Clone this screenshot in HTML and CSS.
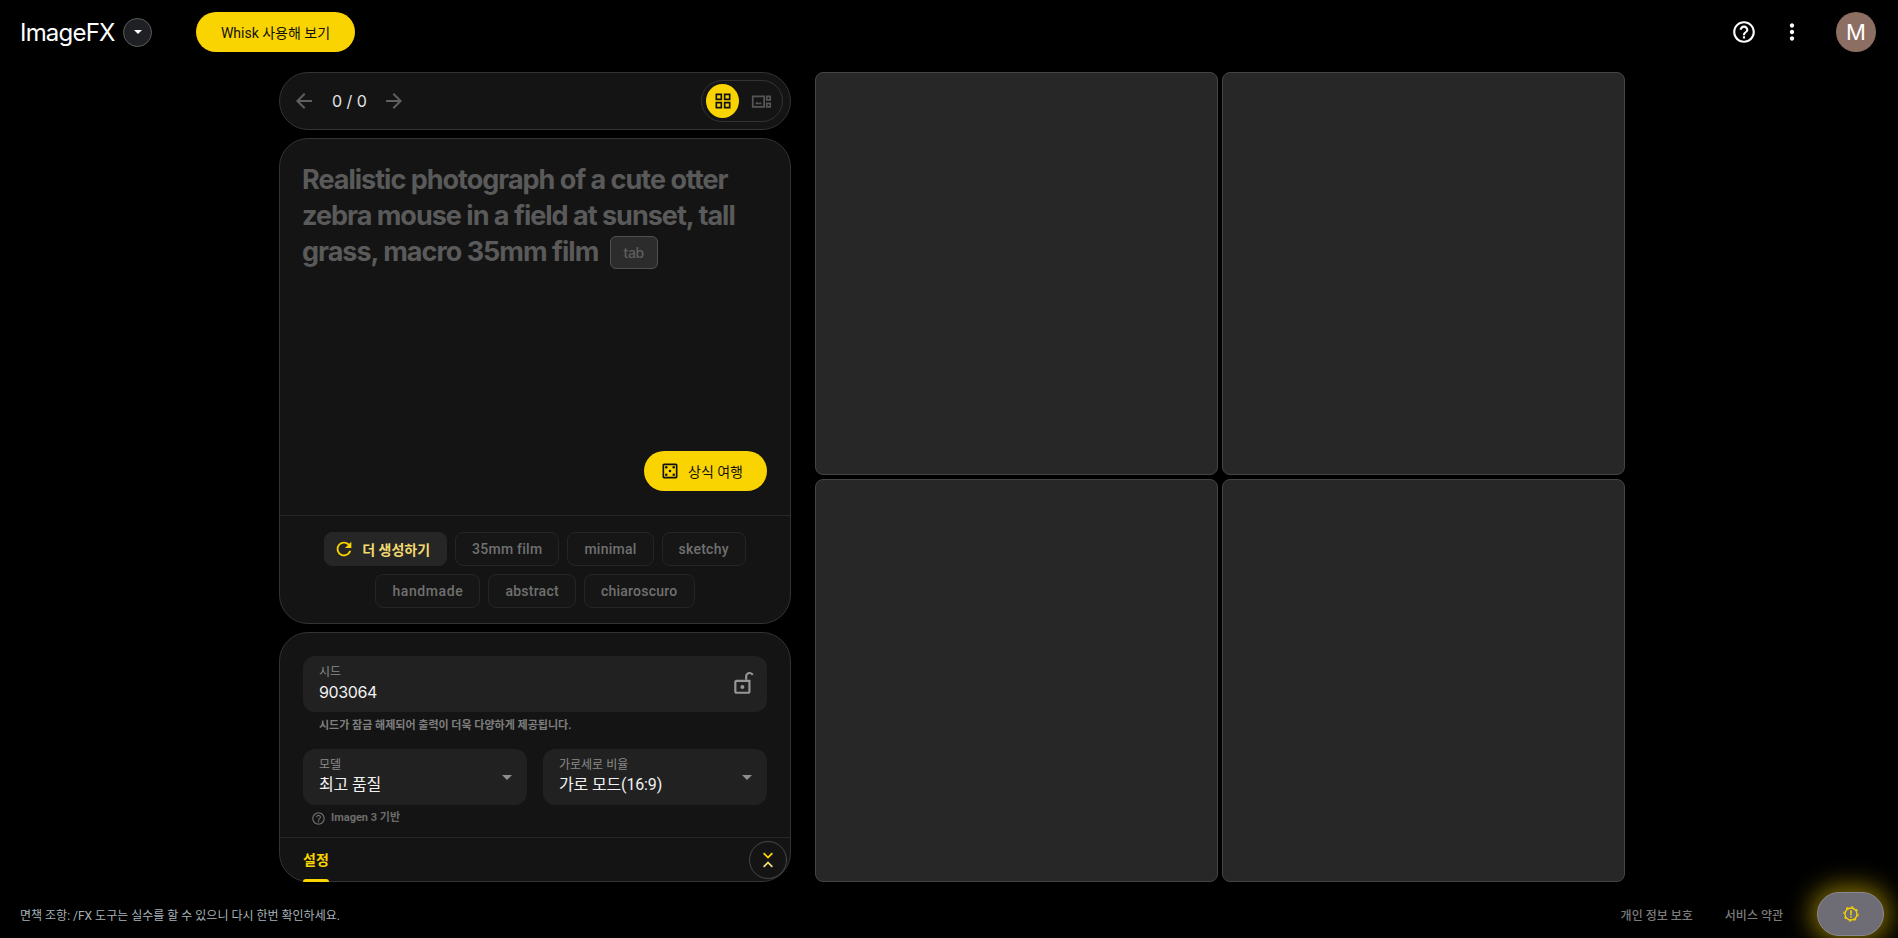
FILE: index.html
```html
<!DOCTYPE html>
<html lang="ko">
<head>
    <meta charset="UTF-8">
    <meta name="viewport" content="width=device-width, initial-scale=1.0">
    <title>ImageFX</title>
    <link rel="stylesheet" href="styles.css">
</head>
<body>
    <header class="topbar">
        <div class="brand">
            <span class="logo">ImageFX</span>
            <button class="logo-menu"><span class="logo-caret"></span></button>
            <button class="whisk-btn">Whisk 사용해 보기</button>
        </div>
        <div class="top-actions">
            <svg class="top-icon" viewBox="0 0 24 24"><path d="M11 18h2v-2h-2v2zm1-16C6.48 2 2 6.48 2 12s4.48 10 10 10 10-4.48 10-10S17.52 2 12 2zm0 18c-4.41 0-8-3.59-8-8s3.59-8 8-8 8 3.59 8 8-3.59 8-8 8zm0-14c-2.21 0-4 1.79-4 4h2c0-1.1.9-2 2-2s2 .9 2 2c0 2-3 1.75-3 5h2c0-2.25 3-2.5 3-5 0-2.21-1.79-4-4-4z"/></svg>
            <svg class="top-icon" viewBox="0 0 24 24"><path d="M12 8c1.1 0 2-.9 2-2s-.9-2-2-2-2 .9-2 2 .9 2 2 2zm0 2c-1.1 0-2 .9-2 2s.9 2 2 2 2-.9 2-2-.9-2-2-2zm0 6c-1.1 0-2 .9-2 2s.9 2 2 2 2-.9 2-2-.9-2-2-2z"/></svg>
            <div class="avatar">M</div>
        </div>
    </header>

    <main class="workspace">
        <section class="left-col">
            <div class="pager">
                <svg class="arrow" viewBox="0 0 24 24"><path d="M20 11H7.83l5.59-5.59L12 4l-8 8 8 8 1.41-1.41L7.83 13H20v-2z"/></svg>
                <span class="page-count">0 / 0</span>
                <svg class="arrow" viewBox="0 0 24 24"><path d="M12 4l-1.41 1.41L16.17 11H4v2h12.17l-5.58 5.59L12 20l8-8z"/></svg>
                <div class="view-toggle">
                    <span class="view-on">
                        <svg viewBox="0 0 24 24" class="view-icon"><path d="M4 4h6v6H4zM14 4h6v6h-6zM4 14h6v6H4zM14 14h6v6h-6z"/></svg>
                    </span>
                    <svg viewBox="0 0 24 24" class="view-off"><path d="M2 6h13v12H2z"/><path d="M4.500 15l2.500-3 2 2 1.500-1.500 2 2.500z" class="fill"/><path d="M18 6h4v4h-4zM18 14h4v4h-4z"/></svg>
                </div>
            </div>

            <div class="card prompt-card">
                <div class="prompt-area">
                    <p class="prompt-text">Realistic photograph of a cute otter zebra mouse in a field at sunset, tall grass, macro 35mm film <span class="tab-key">tab</span></p>
                    <button class="lucky-btn">
                        <svg viewBox="0 0 24 24"><path d="M19 3H5c-1.100 0-2 .9-2 2v14c0 1.100.9 2 2 2h14c1.100 0 2-.9 2-2V5c0-1.100-.9-2-2-2zm0 16H5V5h14v14z"/><circle cx="7.500" cy="16.500" r="1.500"/><circle cx="7.500" cy="7.500" r="1.500"/><circle cx="12" cy="12" r="1.500"/><circle cx="16.500" cy="16.500" r="1.500"/><circle cx="16.500" cy="7.500" r="1.500"/></svg>
                        상식 여행
                    </button>
                </div>
                <div class="chips">
                    <button class="chip chip-more">
                        <svg viewBox="0 0 24 24"><path d="M17.650 6.350C16.200 4.900 14.210 4 12 4c-4.420 0-7.990 3.580-7.990 8s3.570 8 7.990 8c3.730 0 6.840-2.550 7.730-6h-2.080c-.82 2.330-3.040 4-5.650 4-3.310 0-6-2.690-6-6s2.690-6 6-6c1.660 0 3.140.69 4.220 1.780L13 11h7V4l-2.350 2.350z"/></svg>
                        더 생성하기
                    </button>
                    <button class="chip">35mm film</button>
                    <button class="chip">minimal</button>
                    <button class="chip">sketchy</button>
                    <button class="chip chip-hand">handmade</button>
                    <button class="chip">abstract</button>
                    <button class="chip">chiaroscuro</button>
                </div>
            </div>

            <div class="card settings-card">
                <div class="settings-body">
                    <div class="field seed-field">
                        <div>
                            <div class="field-label">시드</div>
                            <div class="field-value seed-value">903064</div>
                        </div>
                        <svg class="lock" viewBox="0 0 24 24"><path d="M10.500 17.500c1 0 1.800-.8 1.800-1.800s-.8-1.800-1.800-1.800-1.800.8-1.800 1.800.8 1.800 1.800 1.800zM18 9H5c-1.100 0-2 .9-2 2v9c0 1.100.9 2 2 2h11c1.100 0 2-.9 2-2V9zm-2 11H5v-9h11v9z"/><path d="M13 9V6c0-2.300 1.800-4.200 4.200-4.200 1.600 0 3 .9 3.700 2.200l-1.700 1c-.4-.8-1.100-1.300-2-1.300-1.300 0-2.200 1-2.200 2.300v3z"/></svg>
                    </div>
                    <p class="hint">시드가 잠금 해제되어 출력이 더욱 다양하게 제공됩니다.</p>
                    <div class="select-row">
                        <div class="field">
                            <div>
                                <div class="field-label">모델</div>
                                <div class="field-value">최고 품질</div>
                            </div>
                            <span class="caret"></span>
                        </div>
                        <div class="field">
                            <div>
                                <div class="field-label">가로세로 비율</div>
                                <div class="field-value">가로 모드(16:9)</div>
                            </div>
                            <span class="caret"></span>
                        </div>
                    </div>
                    <div class="model-note">
                        <svg viewBox="0 0 24 24"><path d="M11 18h2v-2h-2v2zm1-16C6.480 2 2 6.480 2 12s4.480 10 10 10 10-4.480 10-10S17.520 2 12 2zm0 18c-4.410 0-8-3.590-8-8s3.590-8 8-8 8 3.590 8 8-3.590 8-8 8zm0-14c-2.210 0-4 1.790-4 4h2c0-1.100.9-2 2-2s2 .9 2 2c0 2-3 1.750-3 5h2c0-2.250 3-2.500 3-5 0-2.210-1.790-4-4-4z"/></svg>
                        Imagen 3 기반
                    </div>
                </div>
                <div class="tabbar">
                    <div class="tab">
                        <span>설정</span>
                        <span class="tab-line"></span>
                    </div>
                    <button class="collapse-btn">
                        <svg viewBox="0 0 24 24"><path d="M6 4.500l1.500-1.500L12 7.500 16.500 3 18 4.500l-6 6z"/><path d="M6 19.500L7.500 21l4.500-4.500 4.500 4.500 1.500-1.500-6-6z" class="pale"/></svg>
                    </button>
                </div>
            </div>
        </section>

        <section class="results">
            <div class="slot"></div>
            <div class="slot"></div>
            <div class="slot"></div>
            <div class="slot"></div>
        </section>
    </main>

    <footer class="footer">
        <span class="disclaimer">면책 조항: /FX 도구는 실수를 할 수 있으니 다시 한번 확인하세요.</span>
        <div class="footer-right">
            <span class="footer-link">개인 정보 보호</span>
            <span class="footer-link">서비스 약관</span>
            <button class="feedback-btn">
                <svg viewBox="0 0 24 24"><circle cx="12" cy="12" r="8" class="ring"/><circle cx="12" cy="12" r="9.500" class="teeth"/><path d="M11 7h2v6.500h-2zM11 15h2v2h-2z"/></svg>
            </button>
        </div>
    </footer>
</body>
</html>
```

FILE: styles.css
```css
* { box-sizing: border-box; }
html, body { height: 100%; }
body { margin: 0; background-color: #000; color: #e3e3e3; font-family: "Roboto", "Noto Sans CJK KR", sans-serif; overflow: hidden; display: flex; flex-direction: column; }
button { font-family: inherit; border: none; padding: 0; cursor: pointer; }
svg { display: block; fill: currentColor; }

/* top bar */
.topbar { height: 72px; flex: none; display: flex; justify-content: space-between; padding: 12px 22px 0 20px; align-items: flex-start; }
.brand { display: flex; align-items: center; height: 40px; }
.logo { font-family: "Inter", sans-serif; font-size: 24px; letter-spacing: -0.8px; color: #fff; width: 103px; }
.logo-menu { width: 29px; height: 29px; border-radius: 50%; background-color: #1f2023; border: 1px solid #5c5c5c; display: flex; align-items: center; justify-content: center; }
.logo-caret { width: 0; height: 0; border-left: 4px solid transparent; border-right: 4px solid transparent; border-top: 4px solid #fff; }
.whisk-btn { margin-left: 44px; width: 159px; height: 40px; border-radius: 20px; background-color: #fad400; color: #111; font-size: 14px; font-weight: 400; }
.top-actions { display: flex; align-items: center; height: 40px; }
.top-icon { width: 26px; height: 26px; color: #fff; margin-right: 22px; }
.avatar { width: 40px; height: 40px; border-radius: 50%; background-color: #8d6e63; color: #fff; font-family: "Inter", sans-serif; font-size: 22px; display: flex; align-items: center; justify-content: center; margin-left: 9px; }

/* main layout */
.workspace { height: 810px; flex: none; display: flex; gap: 24px; padding-left: 279px; }
.left-col { width: 512px; display: flex; flex-direction: column; gap: 8px; }
.card { background-color: #141414; border: 1px solid #333; border-radius: 29px; }

.pager { height: 58px; flex: none; display: flex; align-items: center; background-color: #141414; border: 1px solid #333; border-radius: 29px; padding: 0 7px 0 12px; }
.arrow { width: 24px; height: 24px; color: #606060; }
.page-count { margin: 0 16px; font-size: 16px; font-family: "Inter", sans-serif; color: #e3e3e3; width: 34px; white-space: nowrap; }
.view-toggle { margin-left: auto; width: 82px; height: 42px; border: 1px solid #333; border-radius: 21px; display: flex; align-items: center; padding-left: 4px; gap: 12px; }
.view-on { width: 33px; height: 34px; border-radius: 50%; background-color: #fad400; display: flex; align-items: center; justify-content: center; }
.view-icon { width: 20px; height: 20px; fill: none; stroke: #111; stroke-width: 2; }
.view-off { width: 21px; height: 21px; fill: none; stroke: #555; stroke-width: 2; }
.view-off .fill { fill: #555; stroke: none; }

/* prompt card */
.prompt-card { height: 486px; flex: none; display: flex; flex-direction: column; }
.prompt-area { flex: 1; padding: 23px 23px 24px 22px; display: flex; flex-direction: column; justify-content: space-between; border-bottom: 1px solid #262626; }
.prompt-text { margin: 0; font-family: "Inter", sans-serif; font-size: 27px; line-height: 36px; font-weight: 700; letter-spacing: -1px; color: #5a5a5a; }
.tab-key { display: inline-block; width: 48px; height: 33px; line-height: 31px; margin-left: 6px; text-align: center; font-size: 14px; font-weight: 500; letter-spacing: -0.3px; border: 1px solid #505050; border-radius: 6px; background-color: #2c2c2c; color: #5f5f5f; vertical-align: 3px; }
.lucky-btn { align-self: flex-end; width: 123px; height: 40px; border-radius: 20px; background-color: #fad400; color: #111; font-size: 14px; font-weight: 400; display: flex; align-items: center; padding-left: 16px; gap: 8px; }
.lucky-btn svg { width: 20px; height: 20px; }

.chips { padding: 16px 24px 15px; display: flex; flex-wrap: wrap; justify-content: center; gap: 8px; }
.chip { height: 34px; padding: 0 16px; border-radius: 8px; border: 1px solid #252525; background-color: #161616; color: #707070; font-size: 14px; font-weight: 500; letter-spacing: 0.25px; display: flex; align-items: center; }
.chip-more { background-color: #262626; border-color: #262626; color: #f2da6e; gap: 7px; padding: 0 16px 0 8px; font-weight: 700; letter-spacing: 0; }
.chip-more svg { width: 22px; height: 22px; color: #fad400; }
.chip-hand { letter-spacing: 0.6px; }

/* settings card */
.settings-card { height: 250px; flex: none; display: flex; flex-direction: column; }
.settings-body { padding: 23px 23px 11px; border-bottom: 1px solid #262626; }
.field { height: 56px; flex: 1; background-color: #212121; border-radius: 12px; padding: 8px 16px; display: flex; justify-content: space-between; align-items: center; }
.field-label { font-size: 12px; line-height: 16px; color: #8a8a8a; }
.field-value { font-size: 16px; line-height: 24px; color: #f1f1f1; letter-spacing: -0.15px; }
.seed-value { font-family: "Inter", sans-serif; letter-spacing: -0.4px; }
.lock { width: 26px; height: 26px; color: #969696; margin: -2px -6px 0 0; }
.hint { margin: 6px 0 15px; padding-left: 16px; font-size: 11px; line-height: 16px; font-weight: 700; color: #7e7e7e; }
.select-row { display: flex; gap: 16px; }
.caret { width: 0; height: 0; border-left: 5px solid transparent; border-right: 5px solid transparent; border-top: 5px solid #8f8f8f; margin-right: -1px; }
.model-note { margin-top: 5px; padding-left: 8px; display: flex; align-items: center; gap: 5px; font-size: 11px; line-height: 16px; font-weight: 700; color: #6c6c6c; }
.model-note svg { width: 15px; height: 15px; }

.tabbar { flex: 1; display: flex; justify-content: space-between; align-items: center; padding: 0 3px 0 23px; }
.tab { align-self: stretch; display: flex; flex-direction: column; justify-content: flex-end; gap: 9px; color: #fad400; font-size: 14px; font-weight: 700; line-height: 20px; }
.tab-line { height: 3px; margin-bottom: -1px; background-color: #fad400; border-radius: 3px 3px 0 0; }
.collapse-btn { width: 38px; height: 38px; border-radius: 50%; background-color: #141414; border: 1px solid #484848; display: flex; align-items: center; justify-content: center; color: #fad400; }
.collapse-btn svg { width: 20px; height: 20px; }
.collapse-btn .pale { fill: #f2da6e; }

/* image slots */
.results { display: grid; grid-template-columns: 403px 403px; grid-template-rows: 403px 403px; gap: 4px; }
.slot { background-color: #272727; border: 1px solid #444; border-radius: 8px; }

/* footer */
.footer { flex: 1; display: flex; justify-content: space-between; align-items: center; padding: 10px 14px 2px 20px; }
.disclaimer { font-size: 12px; color: #a8b2b8; }
.footer-right { display: flex; align-items: center; }
.footer-link { font-size: 12px; font-weight: 500; color: #7c7c7c; margin-right: 32px; }
.footer-link:nth-child(2) { margin-right: 34px; }
.feedback-btn { width: 67px; height: 44px; border-radius: 22px; background-color: #6e6c74; border: 1px solid #8a8894; box-shadow: 0 0 24px 6px rgba(250, 212, 0, 0.5); display: flex; align-items: center; justify-content: center; color: #fad400; }
.feedback-btn svg { width: 18px; height: 18px; }
.feedback-btn .ring { fill: none; stroke: #fad400; stroke-width: 1.800; }
.feedback-btn .teeth { fill: none; stroke: #fad400; stroke-width: 1.500; stroke-dasharray: 3 4.460; }
```
